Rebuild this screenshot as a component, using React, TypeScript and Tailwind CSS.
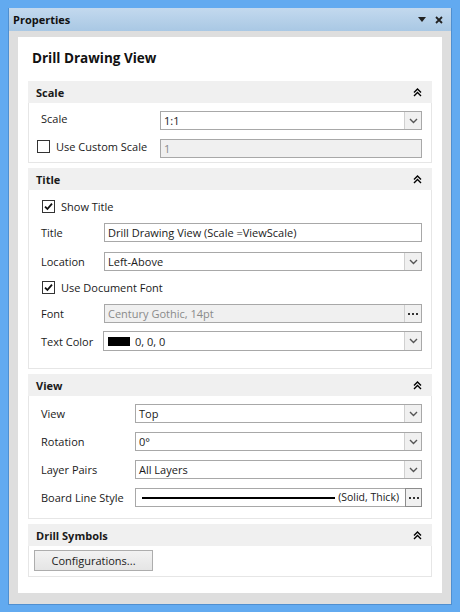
import React from "react";

const font = { fontFamily: '"Open Sans", "Noto Sans", sans-serif' };

function ChevronsUp() {
  return (
    <svg width="9" height="9" viewBox="0 0 9 9" className="text-black">
      <path d="M1 4.5 L4.5 1 L8 4.5 M1 8 L4.5 4.5 L8 8" fill="none" stroke="currentColor" strokeWidth="1.4" />
    </svg>
  );
}

function DropBtn() {
  return (
    <div className="w-[17px] h-full flex items-center justify-center bg-[#f0f0f0] border-l border-[#d0d0d0]">
      <svg width="9" height="6" viewBox="0 0 9 6">
        <path d="M1 1 L4.5 4.5 L8 1" fill="none" stroke="#555" strokeWidth="1.4" />
      </svg>
    </div>
  );
}

function DotsBtn({ framed }: { framed?: boolean }) {
  return (
    <div
      className={
        "w-[17px] flex items-center justify-center gap-[2px] bg-[#f0f0f0] " +
        (framed ? "border border-[#8c8c8c] -my-px -mr-px h-[calc(100%+2px)]" : "h-full border-l border-[#d0d0d0]")
      }
    >
      <span className="w-[2px] h-[2px] bg-[#333]" />
      <span className="w-[2px] h-[2px] bg-[#333]" />
      <span className="w-[2px] h-[2px] bg-[#333]" />
    </div>
  );
}

function Select({ value, children }: { value?: string; children?: React.ReactNode }) {
  return (
    <div className="h-[19px] flex border border-[#a8a8a8] bg-white">
      <div className="flex-1 flex items-center pl-[3px] text-[11px] text-[#1a1a1a] leading-none">
        {children ?? value}
      </div>
      <DropBtn />
    </div>
  );
}

function Input({ value, disabled }: { value: string; disabled?: boolean }) {
  return (
    <div
      className={
        "h-[19px] flex items-center pl-[3px] border border-[#a8a8a8] text-[11px] leading-none " +
        (disabled ? "bg-[#f0f0f0] text-[#8a8a8a]" : "bg-white text-[#1a1a1a]")
      }
    >
      {value}
    </div>
  );
}

function Check({ checked, label, indent }: { checked?: boolean; label: string; indent: string }) {
  return (
    <div className={"flex items-center h-[19px] " + indent}>
      <div className="w-[13px] h-[13px] border border-[#333] bg-white flex items-center justify-center">
        {checked && (
          <svg width="9" height="9" viewBox="0 0 9 9">
            <path d="M1 4.6 L3.4 7 L8 1.6" fill="none" stroke="#111" strokeWidth="1.8" />
          </svg>
        )}
      </div>
      <span className="ml-[6px] text-[11px] text-[#1a1a1a] leading-none">{label}</span>
    </div>
  );
}

function Row({ label, labelW, children, className, raise }: { label: string; labelW: string; children: React.ReactNode; className?: string; raise?: boolean }) {
  return (
    <div className={"flex items-center pl-[12px] pr-[9px] " + (className ?? "")}>
      <span className={"text-[11px] text-[#1a1a1a] leading-none shrink-0 " + labelW + (raise ? " -translate-y-[2px]" : "")}>{label}</span>
      <div className="flex-1">{children}</div>
    </div>
  );
}

function Header({ title }: { title: string }) {
  return (
    <div className="h-[22px] bg-[#f0f0f0] flex items-center justify-between pl-[8px] pr-[10px]">
      <span className="text-[11px] font-bold text-[#1a1a1a] leading-none">{title}</span>
      <ChevronsUp />
    </div>
  );
}

export default function App() {
  return (
    <div className="w-[460px] h-[612px] bg-[#62aaf0] px-[8px] pt-[8px] pb-[7px]" style={font}>
      <div className="h-full flex flex-col border border-[#4f8fd0] border-t-0">
        {/* Title bar */}
        <div className="h-[23px] shrink-0 bg-gradient-to-b from-[#c3d9ee] to-[#a9c8e4] flex items-center justify-between pl-[4px] pr-[8px]">
          <span className="text-[11px] font-bold text-[#111] leading-none">Properties</span>
          <div className="flex items-center gap-[9px]">
            <svg width="8" height="6" viewBox="0 0 8 6">
              <path d="M0 0 H8 L4 5 Z" fill="#222" />
            </svg>
            <svg width="8" height="8" viewBox="0 0 8 8">
              <path d="M1 1 L7 7 M7 1 L1 7" stroke="#222" strokeWidth="1.8" />
            </svg>
          </div>
        </div>

        {/* Body */}
        <div className="flex-1 bg-[#dedede] px-[9px] pt-[6px] pb-[11px] flex">
          <div className="flex-1 bg-white px-[10px] pt-[12px] pb-[16px] flex flex-col">
            <div className="h-[20px] flex items-center pl-[4px] mb-[12px]">
              <span className="text-[13.5px] font-bold text-[#111] leading-none">Drill Drawing View</span>
            </div>

            {/* Scale */}
            <Header title="Scale" />
            <div className="border border-t-0 border-[#e6e6e6] pt-[8px] pb-[4px]">
              <Row label="Scale" labelW="w-[119px]" raise>
                <Select value="1:1" />
              </Row>
              <div className="flex items-center pr-[9px] mt-[9px]">
                <div className="w-[131px] -translate-y-[2px]">
                  <Check label="Use Custom Scale" indent="pl-[8px]" />
                </div>
                <div className="flex-1">
                  <Input value="1" disabled />
                </div>
              </div>
            </div>

            {/* Title */}
            <div className="mt-[5px]">
              <Header title="Title" />
            </div>
            <div className="border border-t-0 border-[#e6e6e6] pt-[7px] pb-[17px]">
              <Check checked label="Show Title" indent="pl-[13px]" />
              <Row label="Title" labelW="w-[63px]" className="mt-[7px]">
                <Input value="Drill Drawing View (Scale =ViewScale)" />
              </Row>
              <Row label="Location" labelW="w-[63px]" className="mt-[10px]">
                <Select value="Left-Above" />
              </Row>
              <div className="mt-[7px]">
                <Check checked label="Use Document Font" indent="pl-[13px]" />
              </div>
              <Row label="Font" labelW="w-[63px]" className="mt-[7px]">
                <div className="h-[19px] flex border border-[#a8a8a8] bg-[#f0f0f0]">
                  <div className="flex-1 flex items-center pl-[3px] text-[11px] text-[#8a8a8a] leading-none">
                    Century Gothic, 14pt
                  </div>
                  <DotsBtn />
                </div>
              </Row>
              <Row label="Text Color" labelW="w-[62px]" className="mt-[8px] pr-[8px]">
                <div className="h-[20px] flex border border-[#a8a8a8] bg-white">
                  <div className="flex-1 flex items-center pl-[4px] text-[11px] text-[#1a1a1a] leading-none">
                    <span className="w-[22px] h-[9px] bg-black mr-[5px]" />
                    0, 0, 0
                  </div>
                  <DropBtn />
                </div>
              </Row>
            </div>

            {/* View */}
            <div className="mt-[5px]">
              <Header title="View" />
            </div>
            <div className="border border-t-0 border-[#e6e6e6] pt-[8px] pb-[11px]">
              <Row label="View" labelW="w-[94px]">
                <Select value="Top" />
              </Row>
              <Row label="Rotation" labelW="w-[94px]" className="mt-[9px]">
                <Select value="0°" />
              </Row>
              <Row label="Layer Pairs" labelW="w-[94px]" className="mt-[9px]">
                <Select value="All Layers" />
              </Row>
              <Row label="Board Line Style" labelW="w-[94px]" className="mt-[9px]">
                <div className="h-[19px] flex border border-[#a8a8a8] bg-white">
                  <div className="flex-1 flex items-center pl-[6px] pr-[6px]">
                    <span className="w-[193px] h-[2px] bg-black" />
                    <span className="ml-auto text-[10.5px] text-[#1a1a1a] leading-none">(Solid, Thick)</span>
                  </div>
                  <DotsBtn framed />
                </div>
              </Row>
            </div>

            {/* Drill Symbols */}
            <div className="mt-[5px]">
              <Header title="Drill Symbols" />
            </div>
            <div className="border border-t-0 border-[#e6e6e6] pt-[4px] pb-[5px] pl-[5px]">
              <button className="w-[119px] h-[21px] border border-[#adadad] bg-gradient-to-b from-[#f2f2f2] to-[#e5e5e5] text-[11px] text-[#1a1a1a] leading-none flex items-center justify-center">
                Configurations...
              </button>
            </div>
          </div>
        </div>
      </div>
    </div>
  );
}
